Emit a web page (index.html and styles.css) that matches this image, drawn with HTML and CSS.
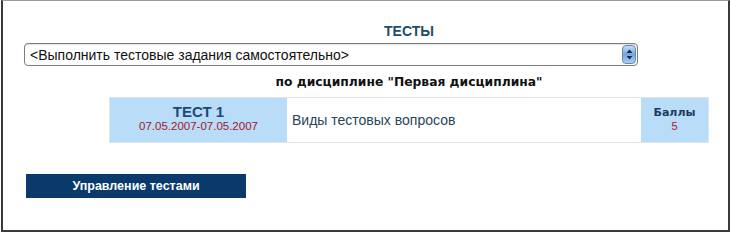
FILE: index.html
```html
<!DOCTYPE html>
<html>
<head>
<meta charset="utf-8">
<link rel="stylesheet" href="styles.css">
</head>
<body>
<div class="frame">
  <div class="heading">ТЕСТЫ</div>
  <div class="select">
    <span class="select-text">&lt;Выполнить тестовые задания самостоятельно&gt;</span>
    <span class="select-btn">
      <svg width="7" height="11" viewBox="0 0 7 11"><path d="M3.5 0.5 L6.5 4 L0.5 4 Z" fill="#1c2a40"/><path d="M3.5 10.5 L6.5 7 L0.5 7 Z" fill="#1c2a40"/></svg>
    </span>
  </div>
  <div class="subtitle">по дисциплине "Первая дисциплина"</div>
  <div class="test-row">
    <div class="cell-name">
      <div class="test-title">ТЕСТ 1</div>
      <div class="test-date">07.05.2007-07.05.2007</div>
    </div>
    <div class="cell-desc">Виды тестовых вопросов</div>
    <div class="cell-score">
      <div class="score-label">Баллы</div>
      <div class="score-value">5</div>
    </div>
  </div>
  <div class="manage-btn">Управление тестами</div>
</div>
</body>
</html>
```

FILE: styles.css
```css
html, body {
  margin: 0;
  padding: 0;
  background: #ffffff;
}
.frame {
  box-sizing: border-box;
  margin-left: 1px;
  width: 729px;
  height: 232px;
  border: 2px solid #3a3a3a;
  border-top: 1px solid #9a9a9a;
  background: #fff;
  font-family: "Liberation Sans", Arial, sans-serif;
}
.heading {
  margin-left: 106px;
  width: 600px;
  text-align: center;
  padding-top: 22px;
  height: 20px;
  font-weight: bold;
  font-size: 14px;
  line-height: 17px;
  color: #1e4d6b;
}
.select {
  margin-left: 21px;
  width: 614px;
  height: 23px;
  box-sizing: border-box;
  border: 1px solid #7d7d7d;
  border-radius: 4px;
  display: flex;
  align-items: center;
  justify-content: space-between;
  box-shadow: inset 0 1px 1px rgba(0,0,0,0.12);
}
.select-text {
  padding-left: 5px;
  font-size: 14px;
  color: #111;
}
.select-btn {
  width: 14px;
  height: 19px;
  margin-right: 1px;
  border-radius: 4px;
  background: linear-gradient(#c6def7, #6ea8e4 50%, #a9cdf3);
  border: 1px solid #6b86a6;
  box-sizing: border-box;
  display: flex;
  align-items: center;
  justify-content: center;
}
.subtitle {
  margin-left: 106px;
  width: 600px;
  text-align: center;
  margin-top: 9px;
  height: 22px;
  font-family: "DejaVu Sans", Verdana, sans-serif;
  font-weight: bold;
  font-size: 12.3px;
  line-height: 15px;
  color: #111;
}
.test-row {
  margin-left: 106px;
  width: 600px;
  height: 46px;
  box-sizing: border-box;
  border: 1px solid #dde6ec;
  display: flex;
}
.cell-name {
  width: 177px;
  background: #b9dcf8;
  display: flex;
  flex-direction: column;
  align-items: center;
  padding-top: 5px;
  box-sizing: border-box;
}
.test-title {
  font-weight: bold;
  font-size: 15px;
  line-height: 17px;
  color: #1b4a78;
}
.test-date {
  font-size: 11.5px;
  line-height: 13px;
  color: #a0182a;
}
.cell-desc {
  flex: 1;
  display: flex;
  align-items: center;
  padding-left: 5px;
  font-size: 14px;
  color: #26465a;
}
.cell-score {
  width: 67px;
  background: #b9dcf8;
  display: flex;
  flex-direction: column;
  align-items: center;
  padding-top: 8px;
  box-sizing: border-box;
}
.score-label {
  font-family: "DejaVu Sans", Verdana, sans-serif;
  font-weight: bold;
  font-size: 11px;
  line-height: 13px;
  color: #1b3a5e;
}
.score-value {
  font-size: 11px;
  line-height: 15px;
  color: #b01a30;
}
.manage-btn {
  margin-left: 23px;
  margin-top: 31px;
  width: 220px;
  height: 24px;
  background: #0a3a6c;
  color: #fff;
  font-weight: bold;
  font-size: 12.5px;
  line-height: 24px;
  text-align: center;
}
```
